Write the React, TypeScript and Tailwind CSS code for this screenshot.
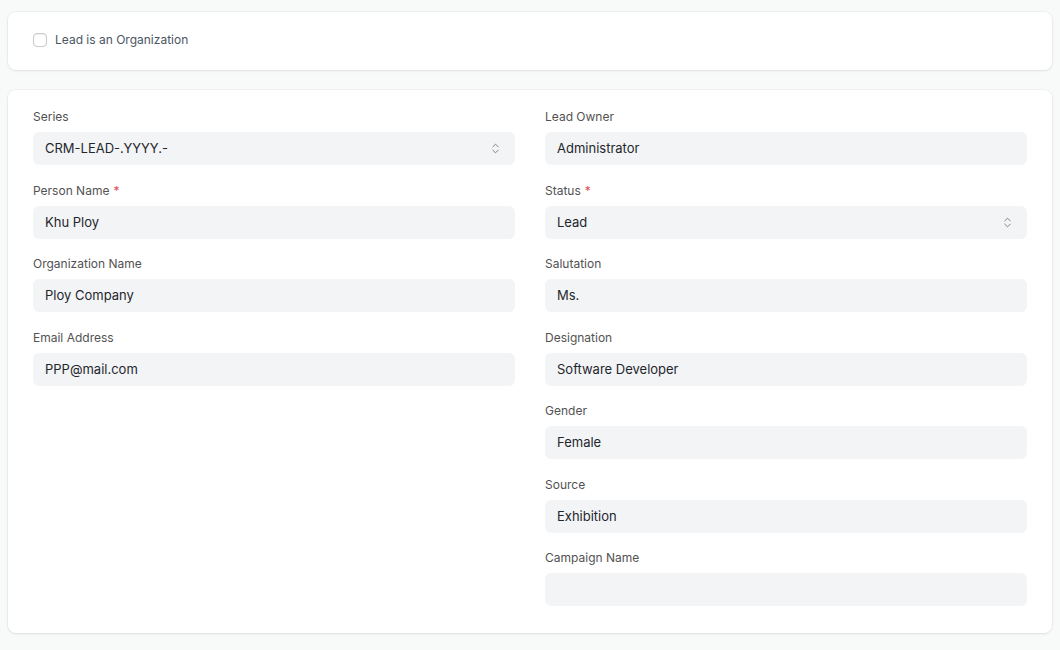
import { ChevronsUpDown } from "lucide-react";

type Field = {
  label: string;
  value: string;
  required?: boolean;
  select?: boolean;
};

const leftFields: Field[] = [
  { label: "Series", value: "CRM-LEAD-.YYYY.-", select: true },
  { label: "Person Name", value: "Khu Ploy", required: true },
  { label: "Organization Name", value: "Ploy Company" },
  { label: "Email Address", value: "PPP@mail.com" },
];

const rightFields: Field[] = [
  { label: "Lead Owner", value: "Administrator" },
  { label: "Status", value: "Lead", required: true, select: true },
  { label: "Salutation", value: "Ms." },
  { label: "Designation", value: "Software Developer" },
  { label: "Gender", value: "Female" },
  { label: "Source", value: "Exhibition" },
  { label: "Campaign Name", value: "" },
];

const FormField = ({ field }: { field: Field }) => {
  return (
    <div className="mb-[17.5px]">
      <div className="text-[12px] leading-4 text-[#525252] mb-[7px]">
        {field.label}
        {field.required && <span className="text-[#e24c4c] ml-1">*</span>}
      </div>
      <div className="h-[33px] rounded-[6px] bg-[#f3f4f5] flex items-center justify-between px-3 text-[13px] text-[#1f272e]">
        <span className="pt-px">{field.value}</span>
        {field.select && (
          <ChevronsUpDown className="h-[13px] w-[13px] text-[#6b7280] mr-[1px]" strokeWidth={1.6} />
        )}
      </div>
    </div>
  );
};

const App = () => {
  return (
    <div
      className="min-h-[650px] bg-[#f8f9f9] px-2 pt-3 pb-4"
      style={{ fontFamily: "Inter, 'Noto Sans', sans-serif" }}
    >
      <div className="bg-white rounded-[8px] shadow-[0_0_0_1px_rgba(0,0,0,0.03),0_1px_3px_rgba(0,0,0,0.08)] h-[58px] flex items-center px-[25px] pb-[2px]">
        <div className="flex items-center gap-2">
          <div className="h-[14px] w-[14px] rounded-[4px] border border-[#c5c9cc] bg-white shadow-[inset_0_1px_2px_rgba(0,0,0,0.06)]" />
          <span className="text-[12px] text-[#4b5563]">Lead is an Organization</span>
        </div>
      </div>

      <div className="mt-5 bg-white rounded-[8px] shadow-[0_0_0_1px_rgba(0,0,0,0.03),0_1px_3px_rgba(0,0,0,0.08)] px-[25px] pt-[19px] pb-[9px]">
        <div className="grid grid-cols-2 gap-x-[30px]">
          <div>
            {leftFields.map((f) => (
              <FormField key={f.label} field={f} />
            ))}
          </div>
          <div>
            {rightFields.map((f) => (
              <FormField key={f.label} field={f} />
            ))}
          </div>
        </div>
      </div>
    </div>
  );
};

export default App;
